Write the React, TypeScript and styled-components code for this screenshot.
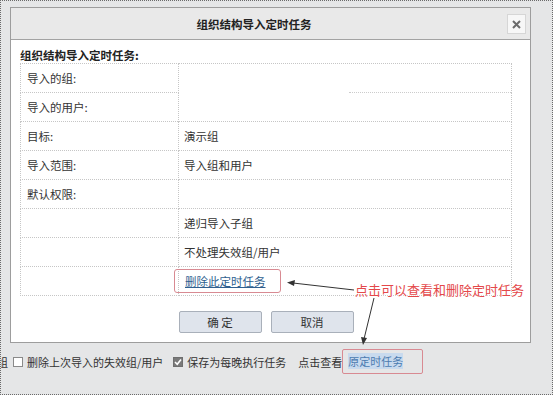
import React from 'react';
import styled, { createGlobalStyle } from 'styled-components';

const GlobalStyle = createGlobalStyle`
  html, body {
    margin: 0;
    padding: 0;
    background: #ffffff;
  }
  body {
    font-family: "Noto Sans CJK SC", "Liberation Sans", sans-serif;
    color: #333;
  }
`;

const Page = styled.div`
  position: relative;
  width: 553px;
  height: 395px;
  box-sizing: border-box;
  border: 1px dotted #6a6a6a;
  background: #e5e6e7;
  padding: 6px 0 0 9px;
  overflow: hidden;
`;

const Dialog = styled.div`
  width: 521px;
  height: 336px;
  box-sizing: border-box;
  border: 1px solid #9d9d9d;
  background: #fff;
  display: flex;
  flex-direction: column;
`;

const Header = styled.div`
  height: 32px;
  flex: none;
  box-sizing: border-box;
  background: #e9e9e9;
  border-bottom: 1px solid #a3a3a3;
  display: flex;
  align-items: center;
  padding: 0 4px 0 0;
`;

const Title = styled.div`
  flex: 1;
  text-align: center;
  font-size: 11.5px;
  font-weight: bold;
  color: #222;
  padding-left: 20px;
  padding-right: 30px;
`;

const CloseButton = styled.div`
  width: 19px;
  height: 20px;
  box-sizing: border-box;
  background: #f7f7f7;
  border: 1px solid #d6d6d6;
  display: flex;
  align-items: center;
  justify-content: center;
  margin-top: 1px;
`;

const Body = styled.div`
  flex: 1;
  padding: 7px 18px 0 9px;
  display: flex;
  flex-direction: column;
`;

const SectionTitle = styled.div`
  font-size: 11.5px;
  font-weight: bold;
  line-height: 16px;
  color: #222;
`;

const Table = styled.table`
  width: 492px;
  border-collapse: collapse;
  font-size: 11.5px;
  color: #333;
`;

const Cell = styled.td<{ $left?: boolean }>`
  height: 29px;
  box-sizing: border-box;
  padding: 0 0 0 ${(p) => (p.$left ? '6px' : '5px')};
  border: 1px dotted #c6c6c6;
  width: ${(p) => (p.$left ? '158px' : 'auto')};
  vertical-align: middle;
`;

const MergedCell = styled.td`
  border: 1px dotted #c6c6c6;
  padding: 0;
  vertical-align: top;
`;

const PartialLine = styled.div`
  height: 28px;
  margin-left: 170px;
  border-bottom: 1px dotted #cccccc;
`;

const LinkBox = styled.span`
  display: inline-block;
  margin-left: -10px;
  padding: 3px 14px 3px 10px;
  border: 1px solid #d88a92;
  border-radius: 3px;
`;

const Link = styled.a`
  color: #2f5f8f;
  text-decoration: underline;
`;

const ButtonRow = styled.div`
  display: flex;
  justify-content: center;
  gap: 9px;
  margin-top: 15px;
`;

const Button = styled.div`
  width: 83px;
  height: 22px;
  box-sizing: border-box;
  border: 1px solid #a9b0ba;
  border-radius: 2px;
  background: #dfe4ec;
  font-size: 11.5px;
  color: #333;
  display: flex;
  align-items: center;
  justify-content: center;
`;

const Footer = styled.div`
  display: flex;
  align-items: center;
  margin: 6px 0 0 -13px;
  font-size: 11px;
  color: #333;
  white-space: nowrap;
  line-height: 16px;
`;

const Box = styled.span<{ $checked?: boolean }>`
  display: inline-flex;
  align-items: center;
  justify-content: center;
  width: 10px;
  height: 10px;
  box-sizing: border-box;
  border: 1px solid ${(p) => (p.$checked ? '#6f6f6f' : '#8a8a8a')};
  background: ${(p) => (p.$checked ? '#7a7a7a' : '#fff')};
  margin: 0 4px 0 5px;
`;

const Spacer = styled.span<{ $w: number }>`
  display: inline-block;
  width: ${(p) => p.$w}px;
`;

const FooterLinkBox = styled.span`
  display: inline-block;
  padding: 3px 19px 4px 5px;
  border: 1px solid #d88a92;
  border-radius: 2px;
  margin-left: 0;
`;

const Highlight = styled.span`
  background: #c8daee;
  color: #4b7bb0;
`;

const Note = styled.div`
  position: absolute;
  left: 354px;
  top: 279px;
  font-size: 13px;
  color: #e4484a;
  text-shadow: 0 0 2px #fff, 0 0 2px #fff;
  white-space: nowrap;
`;

const Arrows = styled.svg`
  position: absolute;
  left: 0;
  top: 0;
  pointer-events: none;
`;

export default function App() {
  return (
    <>
      <GlobalStyle />
      <Page>
        <Dialog>
          <Header>
            <Title>组织结构导入定时任务</Title>
            <CloseButton>
              <svg width="9" height="9" viewBox="0 0 9 9">
                <path d="M1 1 L8 8 M8 1 L1 8" stroke="#6b6b6b" strokeWidth="2" />
              </svg>
            </CloseButton>
          </Header>
          <Body>
            <SectionTitle>组织结构导入定时任务:</SectionTitle>
            <Table>
              <tbody>
                <tr>
                  <Cell $left>导入的组:</Cell>
                  <MergedCell rowSpan={2}>
                    <PartialLine />
                  </MergedCell>
                </tr>
                <tr>
                  <Cell $left>导入的用户:</Cell>
                </tr>
                <tr>
                  <Cell $left>目标:</Cell>
                  <Cell>演示组</Cell>
                </tr>
                <tr>
                  <Cell $left>导入范围:</Cell>
                  <Cell>导入组和用户</Cell>
                </tr>
                <tr>
                  <Cell $left>默认权限:</Cell>
                  <Cell />
                </tr>
                <tr>
                  <Cell $left />
                  <Cell>递归导入子组</Cell>
                </tr>
                <tr>
                  <Cell $left />
                  <Cell>不处理失效组/用户</Cell>
                </tr>
                <tr>
                  <Cell $left />
                  <Cell>
                    <LinkBox>
                      <Link>删除此定时任务</Link>
                    </LinkBox>
                  </Cell>
                </tr>
              </tbody>
            </Table>
            <ButtonRow>
              <Button>确 定</Button>
              <Button>取消</Button>
            </ButtonRow>
          </Body>
        </Dialog>
        <Footer>
          <span>组</span>
          <Box />
          <span>删除上次导入的失效组/用户</span>
          <Spacer $w={5} />
          <Box $checked>
            <svg width="8" height="8" viewBox="0 0 8 8">
              <path d="M1 4 L3.2 6.2 L7 1.5" stroke="#fff" strokeWidth="1.6" fill="none" />
            </svg>
          </Box>
          <span>保存为每晚执行任务</span>
          <Spacer $w={12} />
          <span>点击查看</span>
          <FooterLinkBox>
            <Highlight>原定时任务</Highlight>
          </FooterLinkBox>
        </Footer>
        <Note>点击可以查看和删除定时任务</Note>
        <Arrows width="553" height="396" viewBox="0 0 553 396">
          <line x1="353" y1="289" x2="292" y2="282" stroke="#333" strokeWidth="1" />
          <path d="M286 281.5 L294 279 L293 285 Z" fill="#333" />
          <line x1="373" y1="297" x2="363" y2="338" stroke="#333" strokeWidth="1" />
          <path d="M362 344 L360 336 L366 337 Z" fill="#333" />
        </Arrows>
      </Page>
    </>
  );
}
